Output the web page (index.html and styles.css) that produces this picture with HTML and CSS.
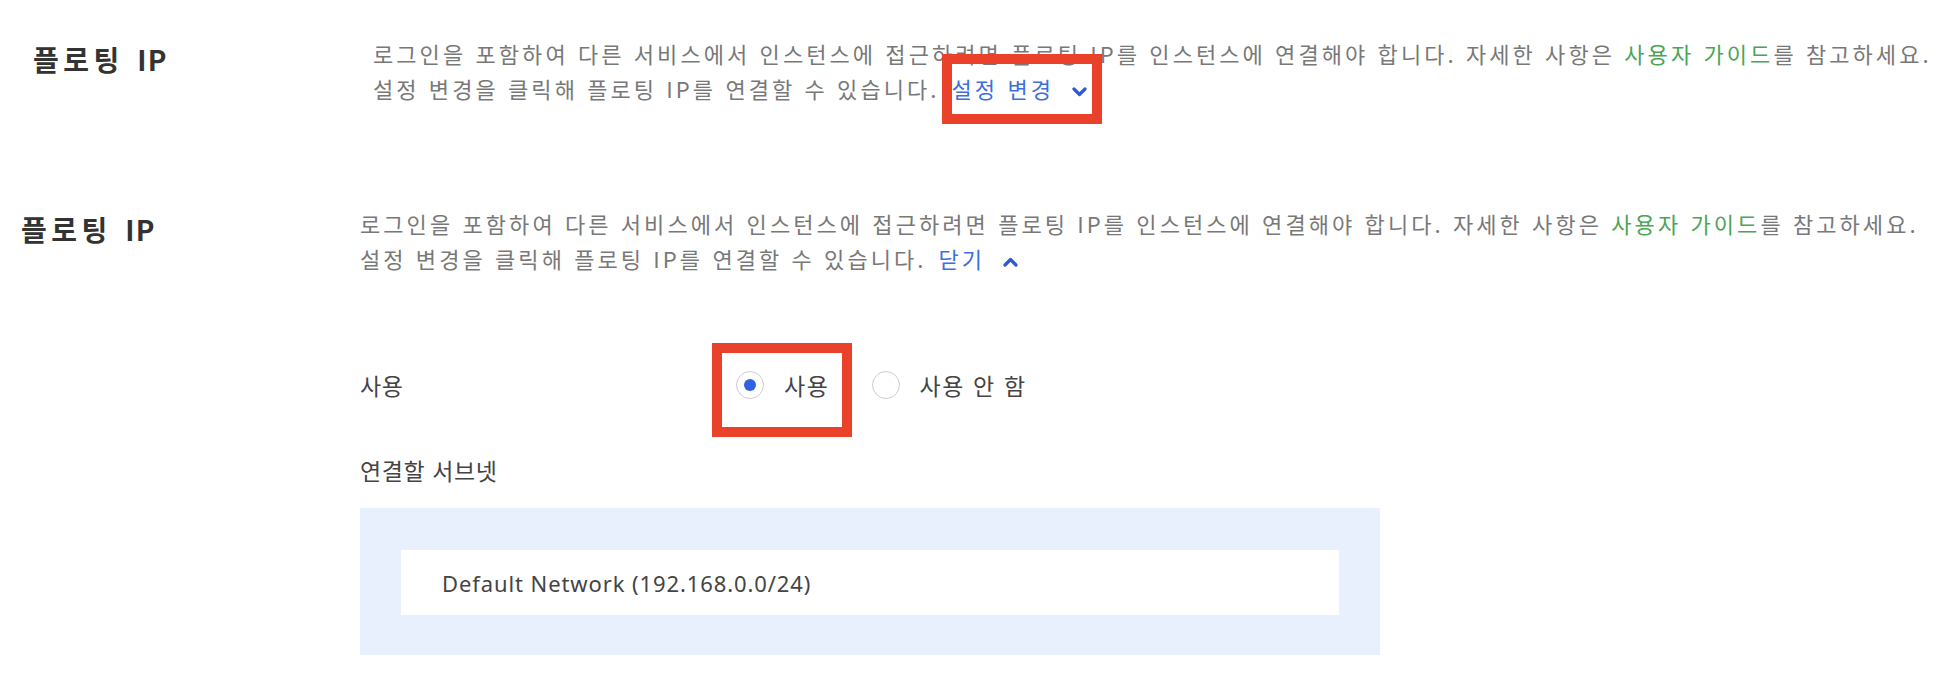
FILE: index.html
```html
<!DOCTYPE html>
<html lang="ko">
<head>
<meta charset="utf-8">
<title>플로팅 IP</title>
<link rel="stylesheet" href="styles.css">
</head>
<body>
<section class="sec sec-first">
  <h2 class="sec-title">플로팅 <span class="latin">IP</span></h2>
  <div class="sec-body">
    <p class="sec-desc">로그인을 포함하여 다른 서비스에서 인스턴스에 접근하려면 플로팅 IP를 인스턴스에 연결해야 합니다. 자세한 사항은 <a class="guide">사용자 가이드</a>를 참고하세요.<br>설정 변경을 클릭해 플로팅 IP를 연결할 수 있습니다.<span class="toggle">설정 변경<svg class="chev" width="15" height="10" viewBox="0 0 15 10"><polyline points="2,2 7.5,7.5 13,2" fill="none" stroke="#2b5bd8" stroke-width="3.2" stroke-linecap="round" stroke-linejoin="round"/></svg><span class="mark mark-toggle"></span></span></p>
  </div>
</section>

<section class="sec sec-second">
  <h2 class="sec-title">플로팅 <span class="latin">IP</span></h2>
  <div class="sec-body">
    <p class="sec-desc">로그인을 포함하여 다른 서비스에서 인스턴스에 접근하려면 플로팅 IP를 인스턴스에 연결해야 합니다. 자세한 사항은 <a class="guide">사용자 가이드</a>를 참고하세요.<br>설정 변경을 클릭해 플로팅 IP를 연결할 수 있습니다.<span class="toggle">닫기<svg class="chev" width="15" height="10" viewBox="0 0 15 10"><polyline points="2,8 7.5,2.5 13,8" fill="none" stroke="#2b5bd8" stroke-width="3.2" stroke-linecap="round" stroke-linejoin="round"/></svg></span></p>

    <div class="form">
      <div class="row row-use">
        <div class="row-label">사용</div>
        <div class="radios">
          <label class="radio radio-on"><span class="dot"></span><span class="radio-text">사용</span><span class="mark mark-radio"></span></label>
          <label class="radio"><span class="dot"></span><span class="radio-text">사용 안 함</span></label>
        </div>
      </div>
      <div class="row-label subnet-label">연결할 서브넷</div>
      <div class="subnet-box">
        <div class="subnet-item">Default Network (192.168.0.0/24)</div>
      </div>
    </div>
  </div>
</section>
</body>
</html>
```

FILE: styles.css
```css
html, body {
  margin: 0;
  padding: 0;
  background: #ffffff;
}

body {
  font-family: "Noto Sans CJK KR", "Noto Sans", sans-serif;
  color: #333333;
  width: 1936px;
  height: 698px;
  overflow: hidden;
}

.sec {
  display: grid;
  align-items: start;
}

.sec-first {
  grid-template-columns: 340px 1fr;
  padding: 36px 0 0 33px;
}

.sec-second {
  grid-template-columns: 339px 1fr;
  padding: 100px 0 0 21px;
}

.sec-title {
  margin: 6px 0 0 0;
  font-size: 28px;
  font-weight: 700;
  line-height: 35px;
  letter-spacing: 4.5px;
  color: #333333;
  white-space: nowrap;
}

.sec-title .latin {
  letter-spacing: 1.5px;
  margin-left: 1px;
}

.sec-desc {
  margin: 0;
  font-size: 22px;
  line-height: 35px;
  letter-spacing: 3.07px;
  color: #787878;
  white-space: nowrap;
}

.guide {
  color: #4aa556;
  text-decoration: none;
}

.toggle {
  position: relative;
  margin-left: 12px;
  color: #3d6fe0;
}

.chev {
  margin-left: 18px;
  vertical-align: 1px;
}

.mark {
  position: absolute;
  box-sizing: border-box;
  border: 10px solid #e9412a;
  pointer-events: none;
}

.mark-toggle {
  left: -10px;
  top: -18px;
  width: 160px;
  height: 70px;
}

.form {
  margin-top: 89px;
}

.row-use {
  display: flex;
  align-items: center;
  height: 40px;
}

.row-label {
  font-size: 23px;
  line-height: 30px;
  letter-spacing: 0.6px;
  color: #444444;
}

.row-use .row-label {
  width: 376px;
}

.radios {
  display: flex;
  align-items: center;
  gap: 42px;
}

.radio {
  position: relative;
  display: flex;
  align-items: center;
  gap: 20px;
}

.dot {
  box-sizing: border-box;
  width: 28px;
  height: 28px;
  border-radius: 50%;
  border: 1.5px solid #cdcdcd;
  background: #ffffff;
  display: flex;
  align-items: center;
  justify-content: center;
}

.radio-on .dot::after {
  content: "";
  width: 12px;
  height: 12px;
  border-radius: 50%;
  background: #2f62e0;
}

.radio-text {
  font-size: 23px;
  line-height: 30px;
  letter-spacing: 1.6px;
  color: #444444;
}

.mark-radio {
  left: -24px;
  top: -27px;
  width: 140px;
  height: 94px;
}

.subnet-label {
  margin-top: 50px;
}

.subnet-box {
  margin-top: 23px;
  width: 1020px;
  box-sizing: border-box;
  padding: 42px 41px 40px 41px;
  background: #e8f0fd;
}

.subnet-item {
  height: 65px;
  display: flex;
  align-items: center;
  padding-left: 41px;
  background: #ffffff;
  font-family: "Noto Sans", sans-serif;
  font-size: 22px;
  letter-spacing: 0.9px;
  color: #444444;
}
```
